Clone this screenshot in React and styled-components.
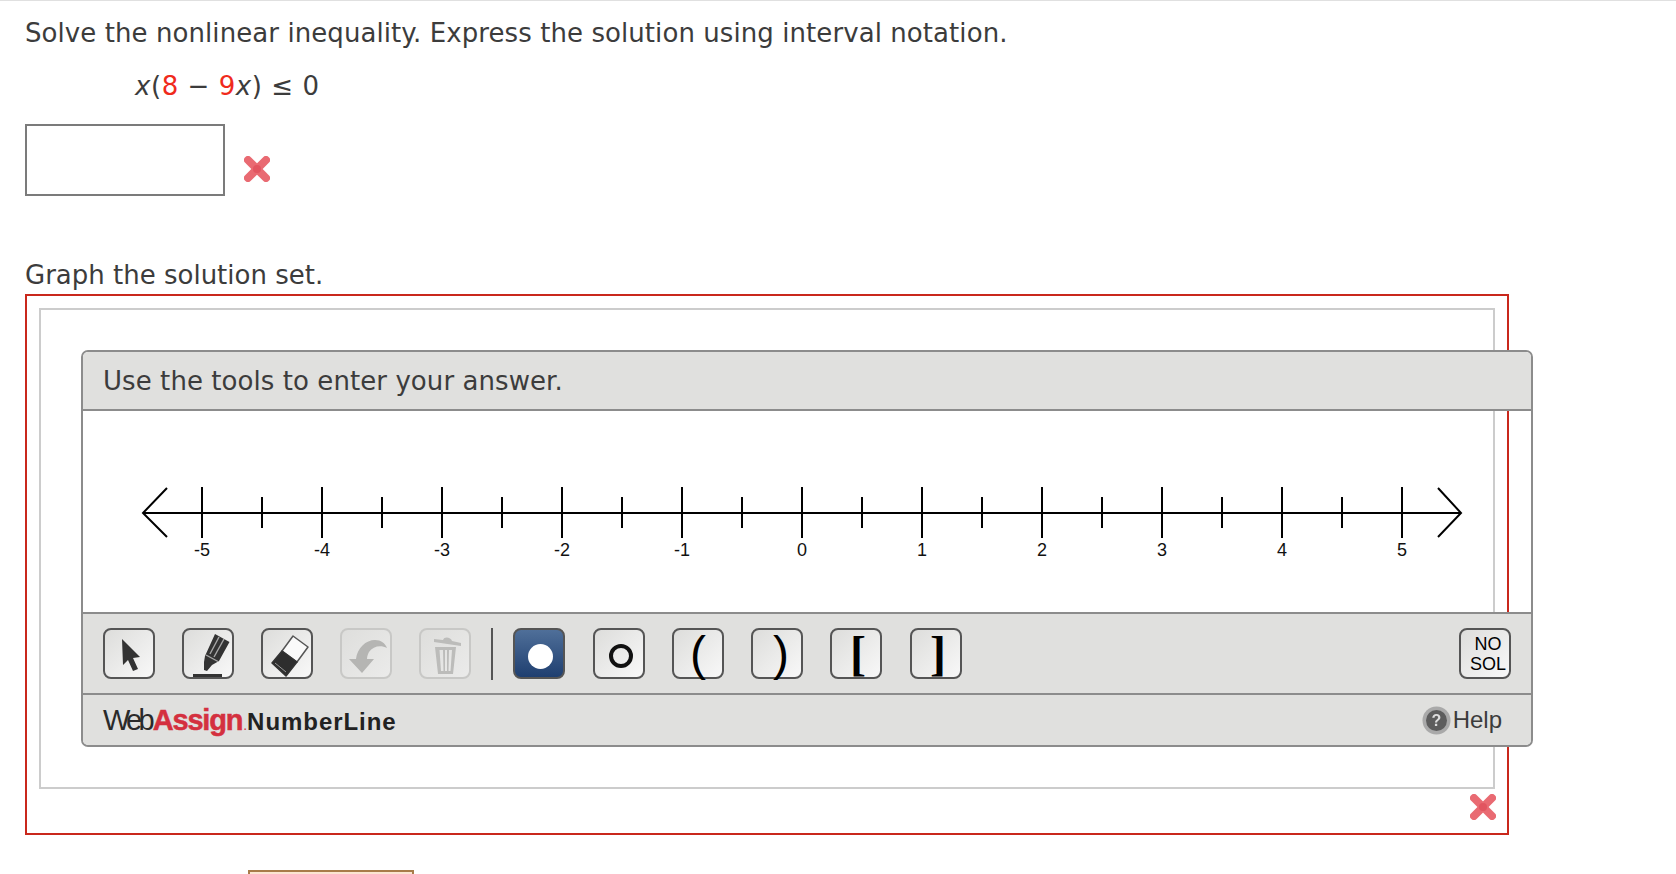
import React from "react";
import styled, { createGlobalStyle } from "styled-components";

const Global = createGlobalStyle`
  html, body { margin: 0; padding: 0; background: #fff; height: 874px; overflow: hidden; }
  body { font-family: "DejaVu Sans", Verdana, sans-serif; color: #3c3c3c; }
`;

const Page = styled.main`
  border-top: 1px solid #e0e0e0;
  padding: 17px 0 0 25px;
  width: 1651px;
`;
const Prompt = styled.p`
  margin: 0;
  font-size: 26px;
  line-height: 31px;
  letter-spacing: 0.075px;
`;
const Equation = styled.div`
  margin: 22px 0 0 110px;
  font-size: 26px;
  line-height: 31px;
  letter-spacing: 0.55px;
  white-space: pre;
`;
const Var = styled.i`font-style: italic;`;
const Coef = styled.span`color: #f02a1c;`;
const AnswerRow = styled.div`
  display: flex;
  align-items: flex-start;
  margin-top: 22px;
  height: 72px;
`;
const AnswerInput = styled.div`
  box-sizing: border-box;
  width: 200px;
  height: 72px;
  border: 2px solid #7b7b7b;
  background: #fff;
`;
const MarkRow = styled.div`
  margin: 31px 0 0 18px;
  display: flex;
`;
const GraphLabel = styled.p`
  margin: 64px 0 0;
  font-size: 26px;
  line-height: 31px;
`;
const RedBox = styled.section`
  box-sizing: border-box;
  margin-top: 3px;
  width: 1484px;
  height: 541px;
  border: 2px solid #c9281c;
  padding: 12px;
  position: relative;
`;
const GrayBox = styled.div`
  box-sizing: border-box;
  width: 1456px;
  height: 481px;
  border: 2px solid #cccccc;
  padding: 40px 0 0 40px;
`;
const Widget = styled.div`
  box-sizing: border-box;
  width: 1452px;
  height: 397px;
  border: 2px solid #8c8c8c;
  border-radius: 7px;
  display: flex;
  flex-direction: column;
`;
const Header = styled.div`
  height: 59px;
  flex: none;
  box-sizing: border-box;
  background: #e0e0de;
  border-bottom: 2px solid #8c8c8c;
  border-radius: 5px 5px 0 0;
  padding-left: 20px;
  font-size: 26px;
  line-height: 59px;
  letter-spacing: 0.07px;
`;
const LineArea = styled.div`
  height: 201px;
  flex: none;
`;
const Toolbar = styled.div`
  height: 83px;
  flex: none;
  box-sizing: border-box;
  background: #e0e0de;
  border-top: 2px solid #8c8c8c;
  border-bottom: 2px solid #8c8c8c;
  padding: 14px 20px 0 20px;
  display: flex;
  align-items: flex-start;
`;
const Btn = styled.div`
  box-sizing: border-box;
  flex: none;
  width: 52px;
  height: 51px;
  margin-right: ${(p) => p.$gap ?? 27}px;
  border: 2px solid ${(p) => (p.$off ? "#c8c8c6" : "#555555")};
  border-radius: 8px;
  background: ${(p) =>
    p.$on
      ? "linear-gradient(180deg, #4f6f99 0%, #1f3f70 100%)"
      : p.$off
      ? "linear-gradient(135deg, #dededc 0%, #ebebea 100%)"
      : "linear-gradient(135deg, #dddddb 0%, #f8f8f8 100%)"};
  display: flex;
  align-items: center;
  justify-content: center;
  svg { filter: blur(0.5px); }
`;
const Glyph = styled.span`
  font-family: ${(p) => (p.$serif ? '"Liberation Serif"' : '"Liberation Sans"')}, serif;
  font-size: ${(p) => p.$size}px;
  font-weight: ${(p) => (p.$bold ? 700 : 400)};
  line-height: 47px;
  color: #000;
  transform: translate(${(p) => p.$dx}px, ${(p) => p.$dy}px);
`;
const Sep = styled.div`
  flex: none;
  width: 2px;
  height: 52px;
  background: #555;
  margin: 0 20px 0 -7px;
`;
const Spacer = styled.div`flex: 1;`;
const NoSol = styled(Btn)`
  margin: 0;
  font-family: "Liberation Sans", sans-serif;
  font-size: 18px;
  line-height: 20px;
  color: #000;
  text-align: center;
  padding-left: 6px;
`;
const Footer = styled.div`
  flex: 1;
  background: #e0e0de;
  border-radius: 0 0 5px 5px;
  display: flex;
  align-items: center;
  padding: 0 29px 0 20px;
  font-family: "Liberation Sans", sans-serif;
`;
const Brand = styled.div`
  display: flex;
  align-items: baseline;
  font-size: 29px;
  color: #2a2a2a;
`;
const BrandWeb = styled.span`
  letter-spacing: -3.8px;
  margin-right: 2px;
`;
const BrandRed = styled.b`
  color: #d4303f;
  font-weight: 700;
  letter-spacing: -1.2px;
  -webkit-text-stroke: 0.5px #d4303f;
`;
const BrandDot = styled.span`
  color: #d4303f;
  font-size: 14px;
  margin-left: 1px;
`;
const Product = styled.b`
  font-size: 24px;
  letter-spacing: 0.95px;
  font-weight: 700;
  color: #222;
`;
const Help = styled.div`
  display: flex;
  align-items: center;
  gap: 2px;
  font-size: 24px;
  color: #3c3c3c;
`;
const Corner = styled.div`
  position: absolute;
  right: 10px;
  bottom: 12px;
  display: flex;
`;
const Submit = styled.div`
  box-sizing: border-box;
  margin: 35px 0 0 223px;
  width: 166px;
  height: 30px;
  border: 2px solid #a87c4a;
  background: #fbe6d2;
`;
const CrossSvg = styled.svg`
  filter: blur(0.5px);
`;

const Cross = () => (
  <CrossSvg width="28" height="28" viewBox="0 0 28 28">
    <g stroke="#e96a72" strokeWidth="8" strokeLinecap="round">
      <path d="M5 5 L23 23" />
      <path d="M23 5 L5 23" />
    </g>
    <circle cx="14" cy="14" r="4" fill="#e25560" />
  </CrossSvg>
);

const ArrowIcon = () => (
  <svg width="48" height="47" viewBox="2 2 48 47">
    <path d="M19 11 L37 29 L30 30 L35 41 L30 43 L25 32 L20 37 Z" fill="#333" />
  </svg>
);
const PenIcon = () => (
  <svg width="48" height="47" viewBox="2 2 48 47">
    <path d="M33 6 L47.5 14 L37 33 L30 37 L25 43 L22 42 L22 34 L23 28 Z" fill="#333" />
    <g stroke="#a8a8a8" strokeWidth="1.4">
      <path d="M37 9 L28 26" />
      <path d="M42 11 L32 29" />
      <path d="M24 27 L36 33.5" />
    </g>
    <rect x="11" y="46" width="29" height="3" fill="#333" />
  </svg>
);
const EraserIcon = () => (
  <svg width="48" height="47" viewBox="2 2 48 47">
    <path d="M32 8 L47 19 L36 34 L21 23 Z" fill="#fafafa" stroke="#555" strokeWidth="1.5" strokeLinejoin="round" />
    <path d="M21 23 L36 34 L25 48 L11 35 Z" fill="#2e2e2e" stroke="#333" strokeWidth="1.5" strokeLinejoin="round" />
    <path d="M14 35 L25 44" stroke="#999" strokeWidth="1" />
  </svg>
);
const UndoIcon = () => (
  <svg width="48" height="47" viewBox="2 2 48 47">
    <path d="M47 20 C41 17 33 18 29 24 C28 26 27 28 27 31 L34 31 L22 45 L9 31 L16 31 C17 20 26 12 35 12 C41 12 45 15 47 20 Z" fill="#b5b5b3" />
  </svg>
);
const TrashIcon = () => (
  <svg width="48" height="47" viewBox="2 2 48 47">
    <g fill="#bcbcba">
      <path d="M15 11 L24 12 C25 8 32 9 33 13 L42 15 L42 18 L15 14 Z" />
      <path d="M16 19 H37 L34 46 H19 Z M20.5 22 L22 43 H24.5 L24 22 Z M26 22 V43 H28 V22 Z M30 22 L29.5 43 H31.5 L33 22 Z" fillRule="evenodd" />
    </g>
  </svg>
);
const SolidDot = () => (
  <svg width="48" height="47" viewBox="0 0 48 47">
    <circle cx="25.5" cy="26.5" r="12.5" fill="#fff" />
  </svg>
);
const HollowDot = () => (
  <svg width="48" height="47" viewBox="0 0 48 47">
    <circle cx="26" cy="26" r="10" fill="none" stroke="#111" strokeWidth="4" />
  </svg>
);
const HelpSvg = styled.svg`
  filter: blur(0.4px);
`;
const HelpIcon = () => (
  <HelpSvg width="29" height="29" viewBox="0 0 29 29">
    <circle cx="14.5" cy="14.5" r="14" fill="#a9a9a9" />
    <circle cx="14.5" cy="14.5" r="10.5" fill="#5d5d5d" />
    <text x="14.5" y="20" fontFamily="Liberation Sans" fontWeight="700" fontSize="16" fill="#ddd" textAnchor="middle">?</text>
  </HelpSvg>
);

const NumberLine = () => {
  const base = 121;
  const y = 102;
  const ticks = [];
  for (let i = 0; i <= 20; i++) ticks.push(i);
  return (
    <svg width="1446" height="201" viewBox="0 0 1446 201">
      <g stroke="#000" strokeWidth="2" fill="none">
        <path d={`M60 ${y} H1378`} />
        <path d={`M84 ${y - 25} L60 ${y} L84 ${y + 24}`} />
        <path d={`M1355 ${y - 25} L1378 ${y} L1355 ${y + 24}`} />
        {ticks.map((i) => {
          const x = base + i * 60 - 2;
          return i % 2 === 0 ? (
            <path key={i} d={`M${x} ${y - 26} V${y + 25}`} />
          ) : (
            <path key={i} d={`M${x} ${y - 16} V${y + 15}`} />
          );
        })}
      </g>
      {[-5, -4, -3, -2, -1, 0, 1, 2, 3, 4, 5].map((n, i) => (
        <text key={n} x={base + i * 120 - 2} y={y + 43} fontFamily="Liberation Sans" fontSize="18" fill="#111" textAnchor="middle">
          {n}
        </text>
      ))}
    </svg>
  );
};

export default function App() {
  return (
    <>
      <Global />
      <Page>
        <Prompt>Solve the nonlinear inequality. Express the solution using interval notation.</Prompt>
        <Equation>
          <Var>x</Var>(<Coef>8</Coef> − <Coef>9</Coef><Var>x</Var>) ≤ 0
        </Equation>
        <AnswerRow>
          <AnswerInput />
          <MarkRow><Cross /></MarkRow>
        </AnswerRow>
        <GraphLabel>Graph the solution set.</GraphLabel>
        <RedBox>
          <GrayBox>
            <Widget>
              <Header>Use the tools to enter your answer.</Header>
              <LineArea><NumberLine /></LineArea>
              <Toolbar>
                <Btn><ArrowIcon /></Btn>
                <Btn><PenIcon /></Btn>
                <Btn><EraserIcon /></Btn>
                <Btn $off><UndoIcon /></Btn>
                <Btn $off><TrashIcon /></Btn>
                <Sep />
                <Btn $on $gap={28}><SolidDot /></Btn>
                <Btn><HollowDot /></Btn>
                <Btn><Glyph $size={48} $dx={0} $dy={0}>(</Glyph></Btn>
                <Btn><Glyph $size={48} $dx={4} $dy={0}>)</Glyph></Btn>
                <Btn $gap={28}><Glyph $size={48} $bold $serif $dx={2} $dy={0}>[</Glyph></Btn>
                <Btn><Glyph $size={48} $bold $serif $dx={2} $dy={0}>]</Glyph></Btn>
                <Spacer />
                <NoSol>NO<br />SOL</NoSol>
              </Toolbar>
              <Footer>
                <Brand>
                  <BrandWeb>Web</BrandWeb>
                  <BrandRed>Assign</BrandRed>
                  <BrandDot>.</BrandDot>
                  <Product>NumberLine</Product>
                </Brand>
                <Spacer />
                <Help><HelpIcon />Help</Help>
              </Footer>
            </Widget>
          </GrayBox>
          <Corner><Cross /></Corner>
        </RedBox>
        <Submit />
      </Page>
    </>
  );
}
